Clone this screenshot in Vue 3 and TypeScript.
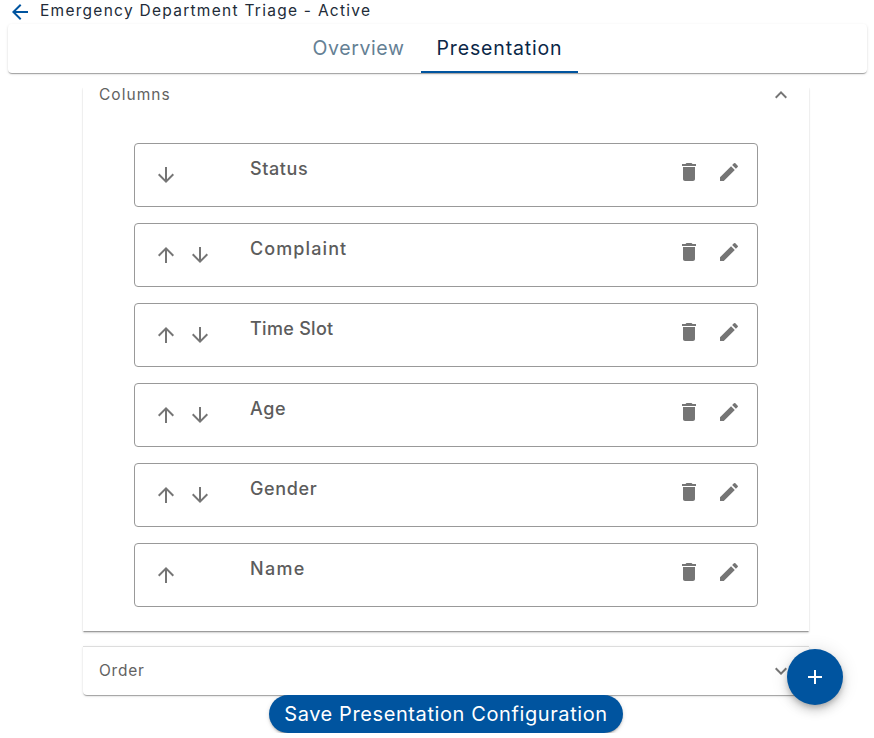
<script setup lang="ts">
import { ref } from 'vue'

interface Column {
  name: string
  up: boolean
  down: boolean
  spacing: number
}

const ICONS = {
  back: 'M20 11H7.83l5.59-5.59L12 4l-8 8 8 8 1.41-1.41L7.83 13H20v-2z',
  up: 'M4 12l1.41 1.41L11 7.83V20h2V7.83l5.58 5.59L20 12l-8-8-8 8z',
  down: 'M20 12l-1.41-1.41L13 16.17V4h-2v12.17l-5.58-5.59L4 12l8 8 8-8z',
  trash: 'M6 19c0 1.1.9 2 2 2h8c1.1 0 2-.9 2-2V7H6v12zM19 4h-3.5l-1-1h-5l-1 1H5v2h14V4z',
  edit: 'M3 17.25V21h3.75L17.81 9.94l-3.75-3.75L3 17.25zM20.71 7.04c.39-.39.39-1.02 0-1.41l-2.34-2.34a.9959.9959 0 0 0-1.41 0l-1.83 1.83 3.75 3.75 1.83-1.83z',
  less: 'M12 8l-6 6 1.41 1.41L12 10.83l4.59 4.58L18 14z',
  more: 'M16.59 8.59L12 13.17 7.41 8.59 6 10l6 6 6-6z',
  add: 'M19 13h-6v6h-2v-6H5v-2h6V5h2v6h6v2z',
}

const tabs = ['Overview', 'Presentation']
const activeTab = ref('Presentation')

const columns: Column[] = [
  { name: 'Status', up: false, down: true, spacing: 0.6 },
  { name: 'Complaint', up: true, down: true, spacing: 1.1 },
  { name: 'Time Slot', up: true, down: true, spacing: 0.3 },
  { name: 'Age', up: true, down: true, spacing: 0.6 },
  { name: 'Gender', up: true, down: true, spacing: 0.65 },
  { name: 'Name', up: true, down: false, spacing: 1.3 },
]
</script>

<template>
  <div class="page">
    <header class="title-bar">
      <svg class="back" viewBox="0 0 24 24"><path :d="ICONS.back" /></svg>
      <h1 class="title">Emergency Department Triage - Active</h1>
    </header>

    <nav class="tabs">
      <button
        v-for="tab in tabs"
        :key="tab"
        class="tab"
        :class="{ active: tab === activeTab, wide: tab === 'Presentation' }"
        @click="activeTab = tab"
      ><span>{{ tab }}</span></button>
    </nav>

    <main class="content">
      <section class="panel columns-panel">
        <div class="summary">
          <span class="columns-label">Columns</span>
          <svg class="icon" viewBox="0 0 24 24"><path :d="ICONS.less" /></svg>
        </div>
        <ul class="list">
          <li v-for="col in columns" :key="col.name" class="item">
            <div class="moves">
              <svg v-if="col.up" class="icon" viewBox="0 0 24 24"><path :d="ICONS.up" /></svg>
              <svg v-if="col.down" class="icon" viewBox="0 0 24 24"><path :d="ICONS.down" /></svg>
            </div>
            <span class="name" :style="{ letterSpacing: col.spacing + 'px' }">{{ col.name }}</span>
            <div class="actions">
              <svg class="icon" viewBox="0 0 24 24"><path :d="ICONS.trash" /></svg>
              <svg class="icon" viewBox="0 0 24 24"><path :d="ICONS.edit" /></svg>
            </div>
          </li>
        </ul>
      </section>

      <section class="panel order-panel">
        <div class="summary">
          <span class="order-label">Order</span>
          <svg class="icon" viewBox="0 0 24 24"><path :d="ICONS.more" /></svg>
        </div>
      </section>

      <button class="save"><span>Save Presentation Configuration</span></button>
    </main>

    <button class="fab" aria-label="Add column">
      <svg viewBox="0 0 24 24"><path :d="ICONS.add" /></svg>
    </button>
  </div>
</template>

<style>
body {
  margin: 0;
  background: #fff;
}
</style>

<style scoped>
.page {
  position: relative;
  height: 738px;
  overflow: hidden;
  font-family: Inter, 'Open Sans', sans-serif;
  color: #222b38;
}
button {
  border: 0;
  padding: 0;
  font: inherit;
  cursor: pointer;
}
.title-bar {
  display: flex;
  align-items: center;
  height: 24px;
  padding-left: 8px;
}
.back {
  width: 24px;
  height: 24px;
  fill: #00549f;
}
.title {
  margin: 0 0 3px 8px;
  font-size: 15.5px;
  font-weight: 400;
  line-height: 21px;
  letter-spacing: 1.27px;
  white-space: nowrap;
}
.tabs {
  display: flex;
  justify-content: center;
  box-sizing: border-box;
  height: 49px;
  margin: 0 7px 0 8px;
  padding-right: 1px;
  border-radius: 4px;
  box-shadow: 0 2px 1px -1px rgba(0, 0, 0, 0.2), 0 1px 1px rgba(0, 0, 0, 0.14), 0 1px 3px rgba(0, 0, 0, 0.12);
}
.tab {
  box-sizing: border-box;
  width: 125px;
  height: 49px;
  background: none;
  border-bottom: 2px solid transparent;
  font-size: 19.5px;
  letter-spacing: 0.6px;
  color: #648094;
  white-space: nowrap;
}
.tab.wide {
  width: 157px;
  letter-spacing: 0.85px;
}
.tab.active {
  border-bottom-color: #00549f;
  color: #0b2747;
}
.content {
  display: flex;
  flex-direction: column;
  align-items: center;
  padding: 14px 0 0 18px;
}
.panel {
  flex: none;
  box-sizing: border-box;
  width: 726px;
  box-shadow: 0 2px 1px -1px rgba(0, 0, 0, 0.2), 0 1px 1px rgba(0, 0, 0, 0.14), 0 1px 3px rgba(0, 0, 0, 0.12);
}
.columns-panel {
  height: 544px;
}
.columns-panel {
  box-shadow: 0 2px 1px -1px rgba(0, 0, 0, 0.2), 0 1px 1px rgba(0, 0, 0, 0.14), 0 2px 2px rgba(0, 0, 0, 0.12);
}
.columns-panel .summary {
  height: 16px;
}
.order-panel {
  height: 49px;
  margin-top: 15px;
  border-top: 1px solid #ddd;
  border-radius: 0 0 4px 4px;
}
.summary {
  display: flex;
  align-items: center;
  justify-content: space-between;
  height: 48px;
  padding: 0 16px;
  font-size: 15.5px;
  line-height: 12px;
  color: #626262;
}
.columns-label {
  letter-spacing: 1.05px;
}
.order-label {
  padding-bottom: 1px;
  letter-spacing: 0.75px;
}
.icon {
  display: block;
  width: 24px;
  height: 24px;
  fill: #757575;
}
.list {
  display: flex;
  flex-direction: column;
  gap: 16px;
  margin: 40px 51px 0;
  padding: 0;
  list-style: none;
}
.item {
  display: flex;
  align-items: flex-start;
  box-sizing: border-box;
  height: 64px;
  padding: 0 16px 0 19px;
  border: 1px solid #999;
  border-radius: 4px;
}
.moves {
  display: flex;
  gap: 10px;
  width: 96px;
  padding-top: 19px;
}
.name {
  flex: 1;
  padding-top: 13px;
  font-size: 18px;
  font-weight: 500;
  line-height: 24px;
  color: #5c5c5c;
}
.actions {
  display: flex;
  gap: 16px;
  padding-top: 16px;
}
.save {
  flex: none;
  width: 354px;
  height: 38px;
  border-radius: 19px;
  background: #00549f;
  color: #fff;
  font-size: 20px;
  letter-spacing: 0.6px;
  white-space: nowrap;
  box-shadow: 0 3px 1px -2px rgba(0, 0, 0, 0.2), 0 2px 2px rgba(0, 0, 0, 0.14), 0 1px 5px rgba(0, 0, 0, 0.12);
  clip-path: inset(0 -6px);
}
.fab {
  position: absolute;
  right: 31px;
  bottom: 33px;
  display: flex;
  align-items: center;
  justify-content: center;
  width: 56px;
  height: 56px;
  border-radius: 50%;
  background: #00549f;
  box-shadow: 0 3px 5px -1px rgba(0, 0, 0, 0.2), 0 6px 10px rgba(0, 0, 0, 0.14), 0 1px 18px rgba(0, 0, 0, 0.12);
}
.fab svg {
  width: 24px;
  height: 24px;
  fill: #fff;
}
</style>
